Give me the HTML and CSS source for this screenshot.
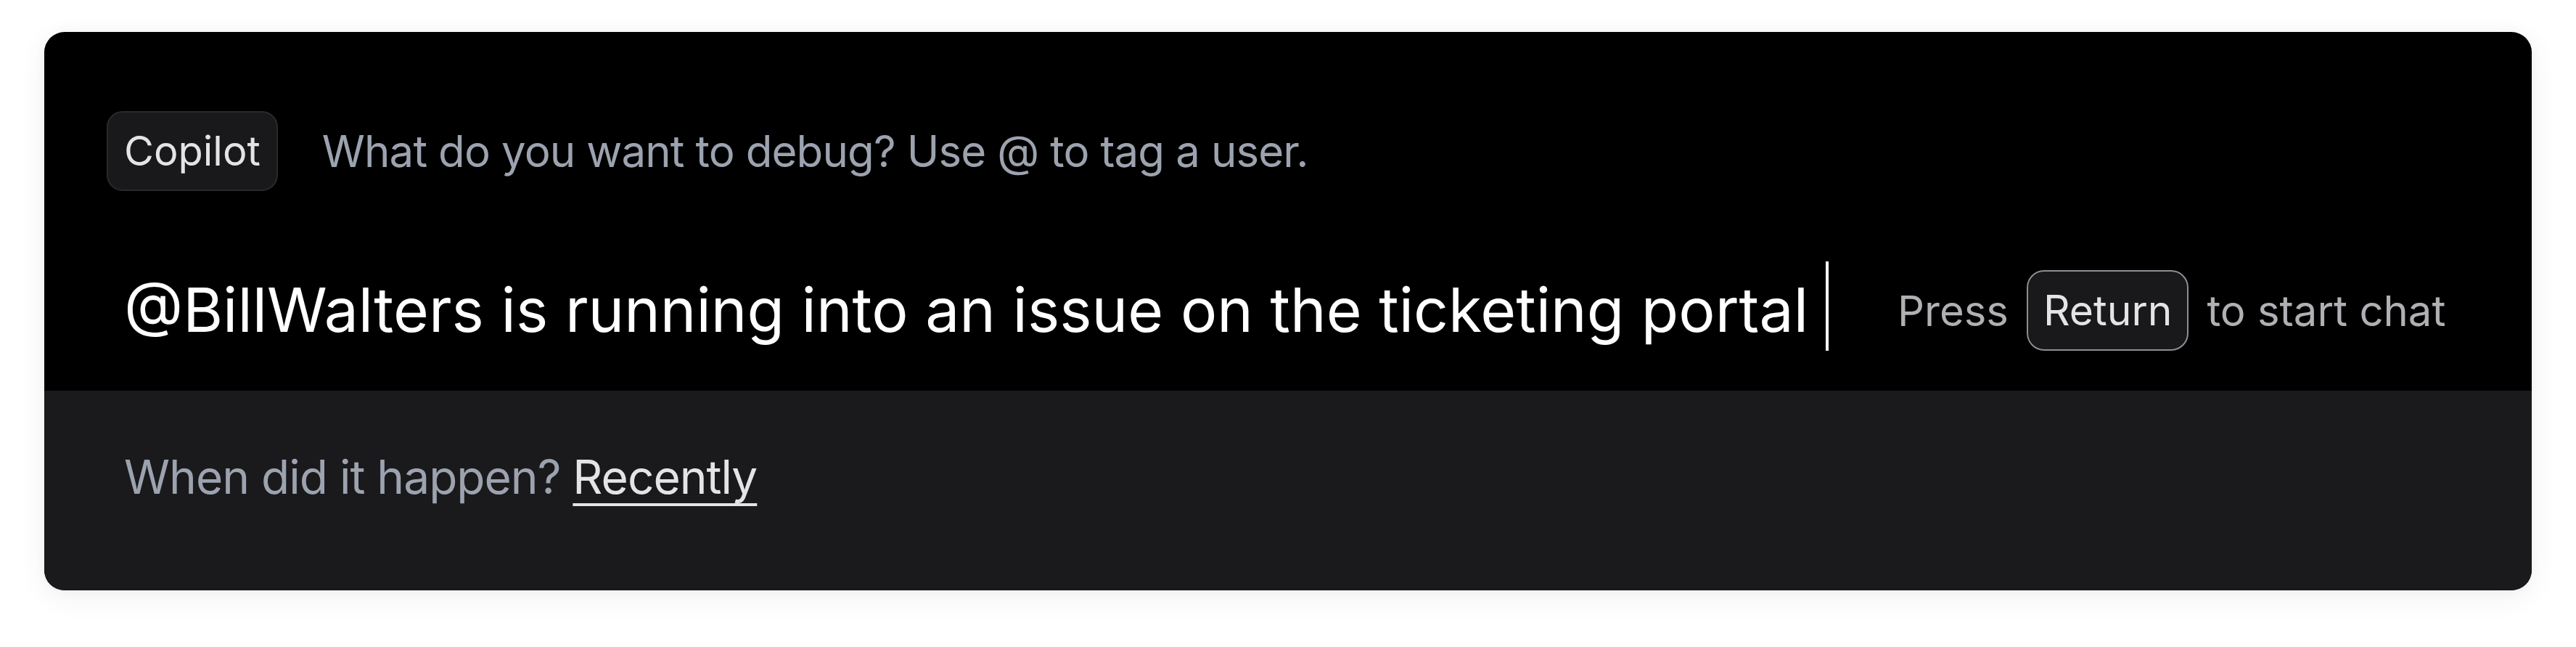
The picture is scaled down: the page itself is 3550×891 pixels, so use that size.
FILE: index.html
```html
<!DOCTYPE html>
<html lang="en">
<head>
<meta charset="utf-8">
<title>Copilot</title>
<link rel="stylesheet" href="styles.css">
</head>
<body>
<div class="card">
  <div class="top">
    <div class="tag-row">
      <span class="badge">Copilot</span>
      <span class="placeholder">What do you want to debug? Use @ to tag a user.</span>
    </div>
    <div class="input-row">
      <span class="message">@BillWalters is running into an issue on the ticketing portal</span>
      <span class="cursor"></span>
      <span class="hint">
        <span class="hint-text">Press</span>
        <kbd class="key">Return</kbd>
        <span class="hint-text">to start chat</span>
      </span>
    </div>
  </div>
  <div class="bottom">
    <span class="question">When did it happen? <span class="answer">Recently</span></span>
  </div>
</div>
</body>
</html>
```
FILE: styles.css
```css
* { box-sizing: border-box; }
body {
  margin: 0;
  background: #ffffff;
  padding: 44px 61px;
  font-family: Inter, "Noto Sans", sans-serif;
}
.card {
  border-radius: 28px;
  overflow: hidden;
  background: #000;
  box-shadow: 0 10px 40px rgba(0,0,0,0.06), 0 0 18px rgba(0,0,0,0.03);
}
.top {
  padding: 109px 0 55px 0;
}
.tag-row {
  display: flex;
  align-items: center;
  padding-left: 86px;
}
.badge {
  display: inline-flex;
  align-items: center;
  height: 110px;
  padding: 0 22px;
  background: #19191b;
  border: 2px solid #2a2a2d;
  border-radius: 22px;
  color: #e4e4e7;
  font-size: 56px;
}
.placeholder {
  margin-left: 61px;
  color: #9ca3af;
  font-size: 60px;
  letter-spacing: -0.9px;
}
.input-row {
  display: flex;
  align-items: flex-end;
  padding-left: 110px;
  margin-top: 97px;
}
.message {
  color: #fff;
  font-size: 84px;
  line-height: 112px;
}
.cursor {
  width: 4px;
  height: 123px;
  background: #fff;
  margin-left: 24px;
}
.hint {
  display: flex;
  align-items: center;
  gap: 25px;
  height: 111px;
  margin-left: 95px;
  color: #b0b0b4;
  font-size: 58px;
}
.key {
  display: inline-flex;
  align-items: center;
  height: 111px;
  padding: 0 21px;
  background: #19191b;
  border: 2px solid #8d8d94;
  border-radius: 24px;
  color: #e4e4e7;
  font-family: inherit;
  font-size: 57px;
}
.bottom {
  background: #1a1a1c;
  height: 275px;
  padding: 80px 0 0 110px;
}
.question {
  color: #9ca3af;
  font-size: 64px;
  letter-spacing: -1px;
}
.answer {
  color: #e4e4e7;
  text-decoration: underline;
  text-decoration-thickness: 4px;
  text-underline-offset: 13px;
}
```
